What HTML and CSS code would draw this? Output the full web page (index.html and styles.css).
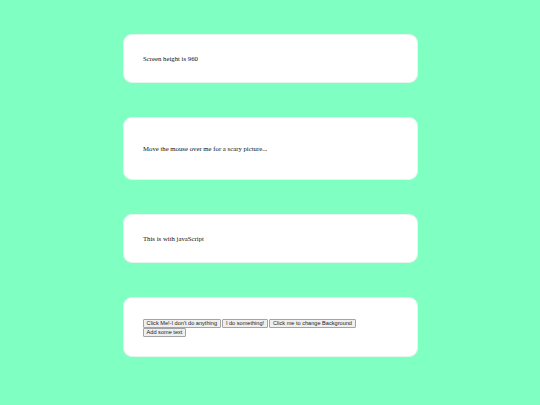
FILE: index.html
```html
<!DOCTYPE html>
<html>
<head>
  <meta charset="utf-8"/>
  <title>Playing with JavaScript</title>
  <link rel="stylesheet" href="styles.css">
</head>
<body>
  <div class="box box-short">
    <p id="screenHeight">Screen height is 960</p>
  </div>

  <div class="box box-tall">
    <p id="scary">Move the mouse over me for a scary picture...</p>
  </div>

  <div class="box box-short">
    <p>This is with javaScript</p>
  </div>

  <div class="box box-buttons">
    <div class="buttons">
      <button>Click Me!-I don't do anything</button>
      <button id="doSomething">I do something!</button>
      <button id="changeBg">Click me to change Background</button><br>
      <button id="addText">Add some text</button>
    </div>
  </div>
</body>
</html>
```

FILE: styles.css
```css
body {
  margin: 0;
  padding: 34px 0 1px;
  background: #80ffc2;
  font-family: "Liberation Serif", serif;
  font-size: 6.75px;
  color: #111;
}
.box {
  box-sizing: border-box;
  width: 295px;
  margin: 0 auto 34px;
  padding: 0 19.5px;
  background: #fff;
  border: 1px solid #e4f7ee;
  border-radius: 9px;
  display: flex;
  align-items: center;
}
.box p {
  margin: 0 0 1px;
}
.box-short {
  height: 49px;
}
.box-tall {
  height: 63px;
}
.box-buttons {
  height: 60px;
  padding-top: 1px;
}
.buttons {
  line-height: 8px;
}
.buttons button {
  font-family: "Liberation Sans", sans-serif;
  font-size: 5.6px;
  line-height: 6px;
  padding: 0.5px 2.6px;
  margin: 0;
  color: #222;
  background: #efefef;
  border: 1px solid #a4a4a4;
  border-radius: 1px;
  vertical-align: top;
}
```
